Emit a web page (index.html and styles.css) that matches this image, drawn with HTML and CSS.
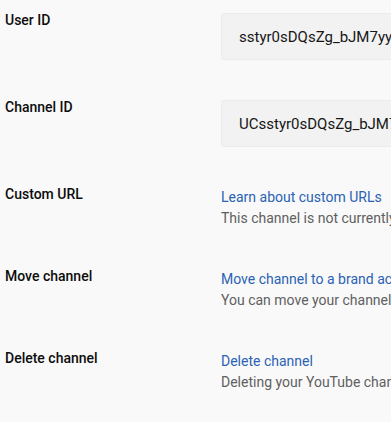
FILE: index.html
```html
<!DOCTYPE html>
<html>
<head>
<meta charset="utf-8">
<link rel="stylesheet" href="styles.css">
</head>
<body>
<div class="list">
  <div class="row">
    <div class="label">User ID</div>
    <div class="value"><div class="box">sstyr0sDQsZg_bJM7yy0sDQsZg</div></div>
  </div>
  <div class="row">
    <div class="label">Channel ID</div>
    <div class="value"><div class="box">UCsstyr0sDQsZg_bJM7yy0sDQsZg</div></div>
  </div>
  <div class="row">
    <div class="label">Custom URL</div>
    <div class="value">
      <a class="link">Learn about custom URLs</a>
      <div class="desc">This channel is not currently eligible for a custom URL</div>
    </div>
  </div>
  <div class="row">
    <div class="label">Move channel</div>
    <div class="value">
      <a class="link">Move channel to a brand account</a>
      <div class="desc">You can move your channel to a brand account</div>
    </div>
  </div>
  <div class="row">
    <div class="label">Delete channel</div>
    <div class="value">
      <a class="link">Delete channel</a>
      <div class="desc">Deleting your YouTube channel won't close your Google Account</div>
    </div>
  </div>
</div>
</body>
</html>
```
FILE: styles.css
```css
html, body {
  margin: 0;
  padding: 0;
  background: #f9f9f9;
  font-family: Roboto, "Noto Sans", sans-serif;
  overflow: hidden;
}
.list {
  display: flex;
  flex-direction: column;
  gap: 40px;
  padding: 13px 0 0 5px;
  width: 800px;
}
.row {
  display: flex;
  align-items: flex-start;
}
.label {
  width: 216px;
  flex: none;
  font-size: 14px;
  line-height: 14px;
  font-weight: 500;
  color: #0d0d0d;
}
.value {
  flex: 1;
  display: flex;
  flex-direction: column;
}
.box {
  box-sizing: border-box;
  height: 47px;
  display: flex;
  align-items: center;
  padding-left: 17px;
  background: #f2f2f2;
  border: 1px solid #ebebeb;
  border-radius: 3px;
  font-size: 15px;
  color: #161616;
  white-space: nowrap;
}
.link {
  font-size: 14px;
  line-height: 21px;
  color: #2a62b4;
  white-space: nowrap;
}
.desc {
  font-size: 14px;
  line-height: 21px;
  color: #606060;
  white-space: nowrap;
}
```
